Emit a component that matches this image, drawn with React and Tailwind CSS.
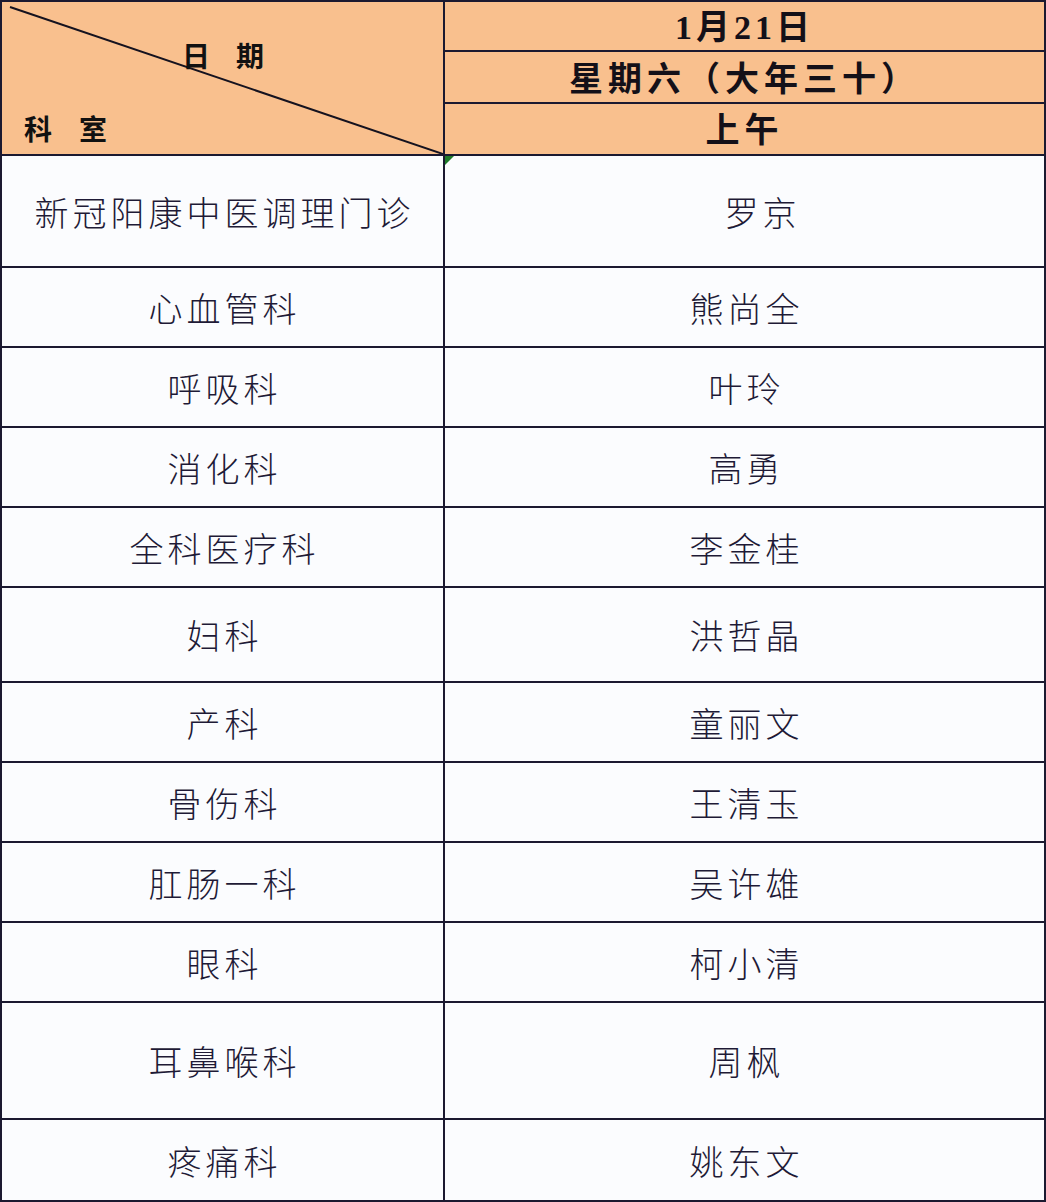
import React from 'react';

// 排班表：1月21日 上午
const rows = [
  { dept: '新冠阳康中医调理门诊', doctor: '罗京', h: 'h-[112px]', shift: true },
  { dept: '心血管科', doctor: '熊尚全', h: 'h-[80px]' },
  { dept: '呼吸科', doctor: '叶玲', h: 'h-[80px]' },
  { dept: '消化科', doctor: '高勇', h: 'h-[80px]' },
  { dept: '全科医疗科', doctor: '李金桂', h: 'h-[80px]' },
  { dept: '妇科', doctor: '洪哲晶', h: 'h-[95px]' },
  { dept: '产科', doctor: '童丽文', h: 'h-[80px]' },
  { dept: '骨伤科', doctor: '王清玉', h: 'h-[80px]' },
  { dept: '肛肠一科', doctor: '吴许雄', h: 'h-[80px]' },
  { dept: '眼科', doctor: '柯小清', h: 'h-[80px]' },
  { dept: '耳鼻喉科', doctor: '周枫', h: 'h-[117px]' },
  { dept: '疼痛科', doctor: '姚东文', h: 'h-[80px]' },
];

const bodyFont = "font-['Noto_Sans_CJK_SC',sans-serif]";
const headFont = "font-['Liberation_Serif','Noto_Sans_CJK_SC',serif]";

const App = () => {
  return (
    <div className="w-[1046px] bg-white">
      <div className="w-[1046px] border-2 border-[#1b1930] box-border">
        {/* ─── Header ─── */}
        <div className="flex h-[154px] border-b-2 border-[#1b1930] box-border bg-[#f9c08e]">
          <div className="relative w-[443px] h-full border-r-2 border-[#1b1930] box-border shrink-0">
            <svg className="absolute inset-0" width="441" height="152" viewBox="0 0 441 152">
              <line x1="8" y1="5" x2="441" y2="152" stroke="#15121f" strokeWidth="2" />
            </svg>
            <div className={`absolute left-[180px] top-[39px] flex gap-[26px] text-[28px] font-bold leading-none text-[#111] ${bodyFont}`}>
              <span>日</span>
              <span>期</span>
            </div>
            <div className={`absolute left-[22px] top-[112px] flex gap-[27px] text-[28px] font-bold leading-none text-[#111] ${bodyFont}`}>
              <span>科</span>
              <span>室</span>
            </div>
          </div>
          <div className={`flex-1 flex flex-col text-[#141018] font-bold ${headFont}`}>
            <div className="h-[50px] border-b-2 border-[#1b1930] box-border flex items-center justify-center text-[34px] tracking-[4px] leading-none pt-[3px]">
              1月21日
            </div>
            <div className="h-[52px] border-b-2 border-[#1b1930] box-border flex items-center justify-center text-[34px] tracking-[5px] leading-none pt-[6px]">
              星期六（大年三十）
            </div>
            <div className="flex-1 flex items-center justify-center text-[34px] tracking-[5px] leading-none pt-[4px]">
              上午
            </div>
          </div>
        </div>

        {/* ─── Rows ─── */}
        {rows.map((r, idx) => (
          <div
            key={idx}
            className={`flex ${r.h} box-border bg-[#fbfcfe] ${idx < rows.length - 1 ? 'border-b-2 border-[#1b1930]' : ''}`}
          >
            <div className={`relative w-[443px] shrink-0 border-r-2 border-[#1b1930] box-border flex items-center justify-center text-[34px] font-light tracking-[4px] text-[#1e1a36] ${bodyFont}`}>
              <span className="pl-[4px]">{r.dept}</span>
            </div>
            <div className={`relative flex-1 flex items-center justify-center text-[34px] font-light tracking-[4px] text-[#1e1a36] ${bodyFont}`}>
              {idx === 0 && (
                <svg className="absolute left-0 top-0" width="9" height="9" viewBox="0 0 9 9">
                  <polygon points="0,0 9,0 0,9" fill="#1f7a2a" />
                </svg>
              )}
              <span className={r.shift ? 'pl-[36px]' : 'pl-[4px]'}>{r.doctor}</span>
            </div>
          </div>
        ))}
      </div>
    </div>
  );
};

export default App;
